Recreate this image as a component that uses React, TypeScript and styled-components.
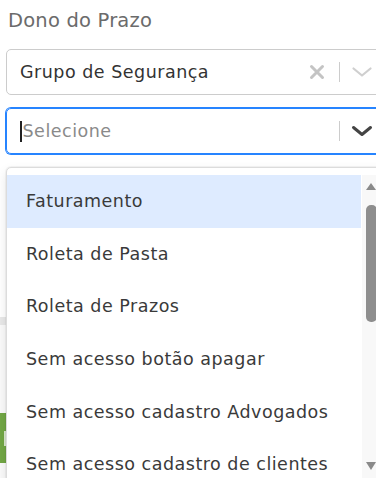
import React from 'react';
import styled, { createGlobalStyle } from 'styled-components';

const GlobalStyle = createGlobalStyle`
  html, body {
    margin: 0;
    padding: 0;
    background: #fff;
    overflow: hidden;
  }
  body {
    font-family: "DejaVu Sans", "Noto Sans", sans-serif;
  }
`;

const Page = styled.div`
  position: relative;
  width: 376px;
  height: 478px;
  overflow: hidden;
`;

const Form = styled.div`
  display: flex;
  flex-direction: column;
  padding: 6px 0 0 6px;
`;

const Label = styled.div`
  margin-left: 2px;
  font-size: 19.5px;
  line-height: 30px;
  letter-spacing: 0.2px;
  color: #6b6b6b;
`;

const Control = styled.div<{ focused?: boolean }>`
  display: flex;
  align-items: center;
  box-sizing: border-box;
  width: 384px;
  height: 46px;
  border: 1px solid ${(p) => (p.focused ? '#2684ff' : '#cccccc')};
  box-shadow: ${(p) => (p.focused ? '0 0 0 1px #2684ff' : 'none')};
  border-radius: 5px;
  margin-top: 13px;
  padding: 0 16px 0 13px;
`;

const Value = styled.div`
  flex: 1;
  font-size: 17.5px;
  letter-spacing: 0.5px;
  color: #333;
`;

const Placeholder = styled.div`
  flex: 1;
  display: flex;
  align-items: center;
  font-size: 17.5px;
  letter-spacing: 0.5px;
  color: #8a8a8a;
`;

const Caret = styled.span`
  display: inline-block;
  width: 1.5px;
  height: 21px;
  background: #222;
  margin-right: 1px;
`;

const Indicators = styled.div`
  display: flex;
  align-items: center;
`;

const Separator = styled.span`
  width: 1px;
  height: 20px;
  background: #cccccc;
  margin: 0 11px 0 14px;
`;

const Background = styled.div`
  position: absolute;
  left: 0;
  top: 317px;
  width: 376px;
  height: 161px;
  display: flex;
  flex-direction: column;
  background: #fafafa;
`;

const GrayBand = styled.div`
  height: 8px;
  background: #e8e8e8;
`;

const GreenButton = styled.div`
  margin-top: 88px;
  width: 120px;
  height: 50px;
  background: #72a745;
  display: flex;
  align-items: center;
  padding-left: 4px;
  box-sizing: border-box;
`;

const ButtonGlyph = styled.span`
  width: 3px;
  height: 15px;
  background: #d9e8cc;
`;

const Menu = styled.div`
  position: absolute;
  left: 6px;
  top: 167px;
  width: 380px;
  height: 320px;
  box-sizing: border-box;
  background: #fff;
  border: 1px solid #dcdcdc;
  border-radius: 5px;
  box-shadow: 0 0 0 1px rgba(0, 0, 0, 0.04), 0 4px 11px rgba(0, 0, 0, 0.1);
  display: flex;
  overflow: hidden;
`;

const List = styled.div`
  width: 354px;
  padding-top: 7px;
  display: flex;
  flex-direction: column;
`;

const Option = styled.div<{ active?: boolean }>`
  height: 52.6px;
  flex: none;
  display: flex;
  align-items: center;
  padding-left: 19px;
  font-size: 17.5px;
  letter-spacing: 0.5px;
  color: #3a3a3a;
  background: ${(p) => (p.active ? '#deebff' : 'transparent')};
  white-space: nowrap;
`;

const ScrollTrack = styled.div`
  width: 16px;
  margin-left: 1px;
  margin-top: 7px;
  background: #f8f8f8;
  display: flex;
  flex-direction: column;
  align-items: flex-start;
  padding-left: 4px;
  box-sizing: border-box;
`;

const ArrowUp = styled.span`
  margin-top: 8px;
  width: 0;
  height: 0;
  border-left: 5px solid transparent;
  border-right: 5px solid transparent;
  border-bottom: 7px solid #8a8a8a;
`;

const Thumb = styled.span`
  margin-top: 15px;
  width: 11px;
  height: 117px;
  border-radius: 5px;
  background: #8e8e8e;
`;

const ArrowDown = styled.span`
  margin-top: 140px;
  width: 0;
  height: 0;
  border-left: 5px solid transparent;
  border-right: 5px solid transparent;
  border-top: 8px solid #8a8a8a;
`;

const ClearIcon = () => (
  <svg width="16" height="16" viewBox="0 0 16 16">
    <path d="M2.5 2.5 L13.5 13.5 M13.5 2.5 L2.5 13.5" stroke="#c4c4c4" strokeWidth="3" strokeLinecap="round" />
  </svg>
);

const Chevron = ({ color, weight }: { color: string; weight: number }) => (
  <svg width="22" height="12" viewBox="0 0 22 12">
    <path d="M2.5 2.5 L11 9.5 L19.5 2.5" fill="none" stroke={color} strokeWidth={weight} strokeLinecap="round" strokeLinejoin="round" />
  </svg>
);

const options = [
  'Faturamento',
  'Roleta de Pasta',
  'Roleta de Prazos',
  'Sem acesso botão apagar',
  'Sem acesso cadastro Advogados',
  'Sem acesso cadastro de clientes',
];

export default function App() {
  return (
    <Page>
      <GlobalStyle />
      <Background>
        <GrayBand />
        <GreenButton>
          <ButtonGlyph />
        </GreenButton>
      </Background>
      <Form>
        <Label>Dono do Prazo</Label>
        <Control>
          <Value>Grupo de Segurança</Value>
          <Indicators>
            <ClearIcon />
            <Separator />
            <Chevron color="#cfcfcf" weight={2.2} />
          </Indicators>
        </Control>
        <Control focused>
          <Placeholder>
            <Caret />
            Selecione
          </Placeholder>
          <Indicators>
            <Separator />
            <Chevron color="#444" weight={3} />
          </Indicators>
        </Control>
      </Form>
      <Menu>
        <List>
          {options.map((o, i) => (
            <Option key={o} active={i === 0}>
              {o}
            </Option>
          ))}
        </List>
        <ScrollTrack>
          <ArrowUp />
          <Thumb />
          <ArrowDown />
        </ScrollTrack>
      </Menu>
    </Page>
  );
}
